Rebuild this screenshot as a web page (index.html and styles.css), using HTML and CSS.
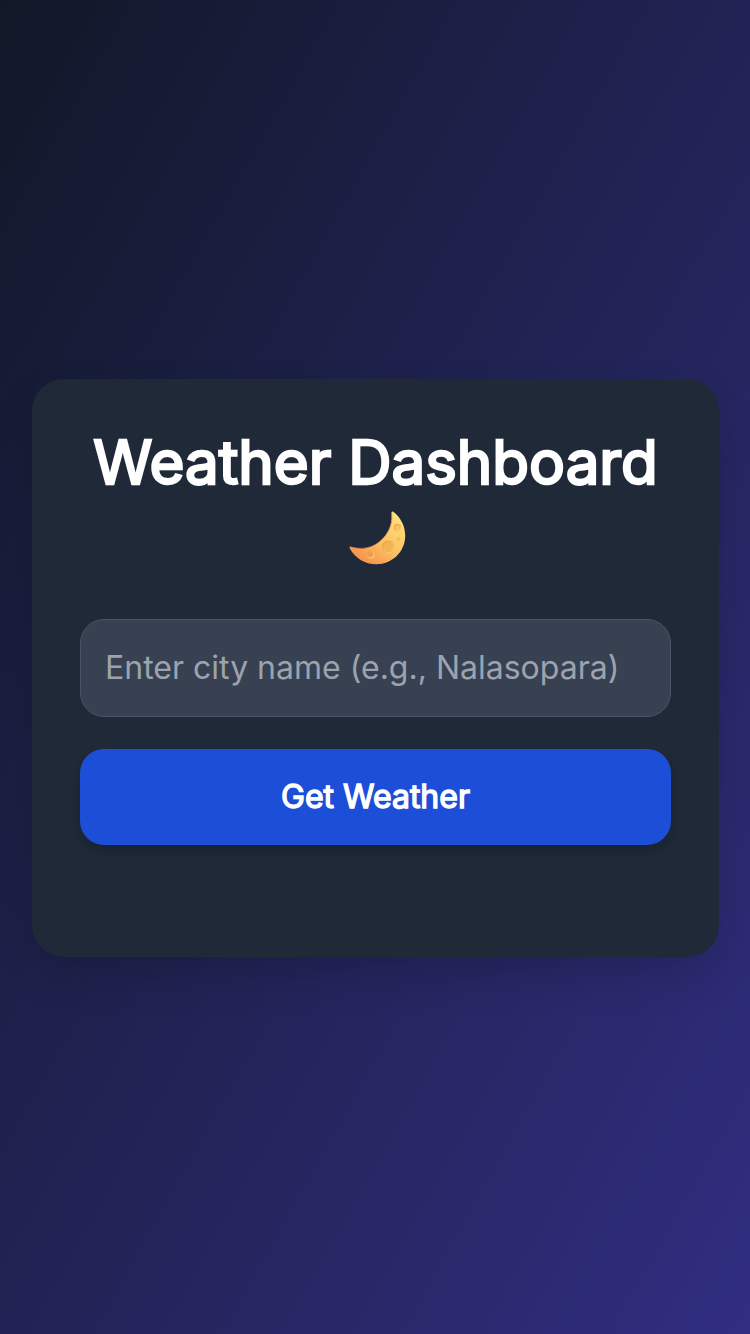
FILE: index.html
```html
<!DOCTYPE html>
<html lang="en">
<head>
<meta charset="utf-8">
<title>Weather Dashboard</title>
<link rel="stylesheet" href="styles.css">
</head>
<body>
<main class="card">
  <h1 class="title"><span class="title-text">Weather Dashboard</span>
    <svg class="moon" viewBox="0 0 57 54" aria-hidden="true">
      <defs>
        <linearGradient id="moonFill" x1="0.85" y1="0.1" x2="0.2" y2="1">
          <stop offset="0" stop-color="#ffdf7c"/>
          <stop offset="0.5" stop-color="#fcc261"/>
          <stop offset="1" stop-color="#f68b4b"/>
        </linearGradient>
        <linearGradient id="crater" x1="0" y1="0" x2="1" y2="1">
          <stop offset="0" stop-color="#e39a45"/>
          <stop offset="1" stop-color="#ffd477"/>
        </linearGradient>
      </defs>
      <path d="M43.2 0.4C42.3 0.6 42.4 2.5 42.6 5C43 14 38.8 23 31.8 29.4C24 36.7 13 39.4 2.8 36C0.9 35.3 0 36 0.7 37.2C5.8 46.8 15.7 53.3 27.3 53.3C43.5 53.3 56.2 40.5 56.2 24.8C56.2 14.5 51.3 5.9 44.2 0.7Z" fill="url(#moonFill)"/>
      <path d="M43.2 0.6C42 2 43.5 7 42.4 12C40.2 24 28 36 15 37.2C10 37.7 5 36.8 1 35.9" fill="none" stroke="#dc7852" stroke-width="0.9" opacity="0.65"/>
      <circle cx="39.3" cy="36" r="5.8" fill="#f3b456" stroke="url(#crater)" stroke-width="1.3"/>
      <circle cx="48.6" cy="16.8" r="3.2" fill="#f8c260" stroke="url(#crater)" stroke-width="1.2"/>
      <circle cx="21.4" cy="43.7" r="3.3" fill="#f2994a" stroke="url(#crater)" stroke-width="1.2"/>
      <circle cx="49.5" cy="28.2" r="2.1" fill="#f7bc5a"/>
    </svg>
  </h1>
  <input class="city" type="text" placeholder="Enter city name (e.g., Nalasopara)">
  <button class="submit" type="button">Get Weather</button>
</main>
</body>
</html>
```
FILE: styles.css
```css
* {
  box-sizing: border-box;
}

body {
  margin: 0;
  min-height: 1334px;
  padding: 2px 31px 0 32px;
  display: flex;
  align-items: center;
  justify-content: center;
  background: linear-gradient(to bottom right, #111827, #312e81);
  font-family: Inter, sans-serif;
}

.card {
  width: 100%;
  height: 578px;
  padding: 48px;
  border-radius: 32px;
  background: #1f2937;
  box-shadow: 0 20px 50px -10px rgba(0, 0, 0, 0.2);
}

.title {
  margin: 0 0 48px;
  height: 144px;
  display: flex;
  flex-direction: column;
  align-items: center;
  color: #fff;
  font-size: 60px;
  font-weight: 400;
  line-height: 70px;
}

.title-text {
  white-space: nowrap;
  -webkit-text-stroke: 2.5px #fff;
}

.moon {
  width: 57px;
  height: 54px;
  margin: 14px 0 0 3px;
}

.city {
  display: block;
  width: 100%;
  height: 98px;
  padding: 0 24px 2px;
  border: 1px solid #4b5563;
  border-radius: 24px;
  background: #374151;
  color: #fff;
  font: 400 32px/48px Inter, sans-serif;
}

.city::placeholder {
  color: #9ca3af;
}

.submit {
  display: block;
  width: 100%;
  height: 96px;
  margin-top: 32px;
  border: 0;
  border-radius: 24px;
  background: #1d4ed8;
  color: #fff;
  font: 400 32px/48px Inter, sans-serif;
  -webkit-text-stroke: 1.4px #fff;
  box-shadow: 0 8px 12px -2px rgba(0, 0, 0, 0.1), 0 4px 8px -2px rgba(0, 0, 0, 0.1);
}
```
